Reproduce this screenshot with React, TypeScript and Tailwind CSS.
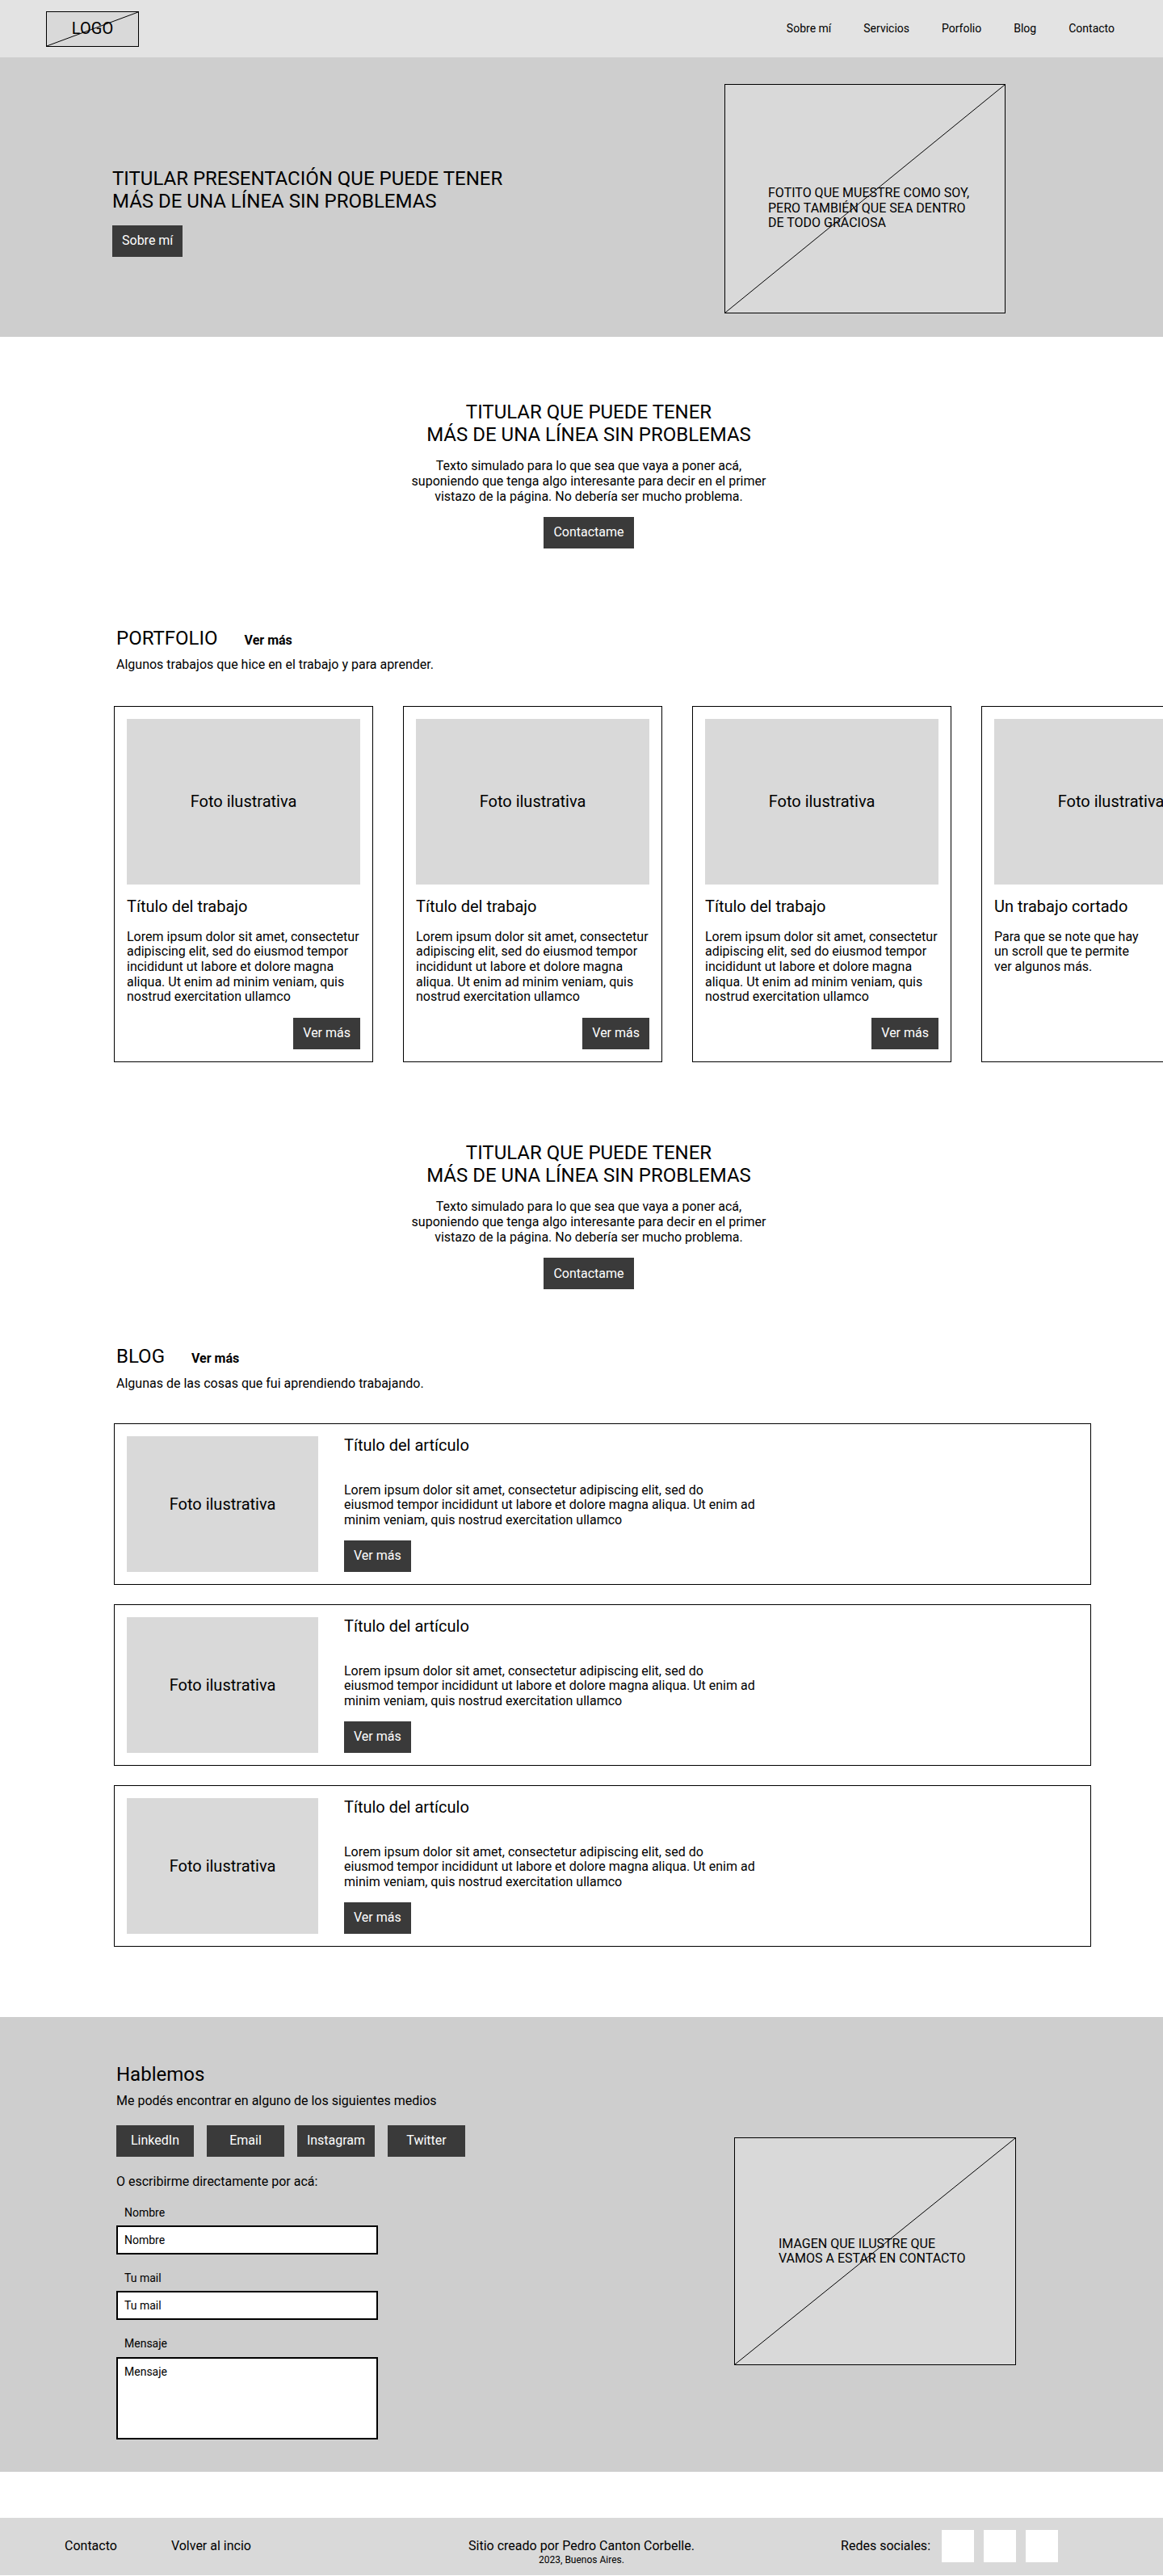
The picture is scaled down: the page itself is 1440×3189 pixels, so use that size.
import React from "react";

const Diagonal = () => (
  <svg
    className="pointer-events-none absolute inset-0 h-full w-full"
    viewBox="0 0 100 100"
    preserveAspectRatio="none"
  >
    <line x1="0" y1="100" x2="100" y2="0" stroke="#000" strokeWidth="1" vectorEffect="non-scaling-stroke" />
  </svg>
);

const Btn = ({ children, className = "" }: { children: React.ReactNode; className?: string }) => (
  <div
    className={`inline-flex h-[39px] items-center justify-center bg-[#3a3a3a] px-3 text-[16px] leading-[1.17] text-white ${className}`}
  >
    {children}
  </div>
);

const SectionTitle = ({ className = "" }: { className?: string }) => (
  <section className={`flex flex-col items-center pl-[18px] text-center ${className}`}>
    <h2 className="text-[24px] leading-[1.17]">
      TITULAR QUE PUEDE TENER
      <br />
      MÁS DE UNA LÍNEA SIN PROBLEMAS
    </h2>
    <p className="mt-4 text-[16px] leading-[1.17]">
      Texto simulado para lo que sea que vaya a poner acá,
      <br />
      suponiendo que tenga algo interesante para decir en el primer
      <br />
      vistazo de la página. No debería ser mucho problema.
    </p>
    <div className="mt-4">
      <Btn>Contactame</Btn>
    </div>
  </section>
);

const lorem = [
  "Lorem ipsum dolor sit amet, consectetur",
  "adipiscing elit, sed do eiusmod tempor",
  "incididunt ut labore et dolore magna",
  "aliqua. Ut enim ad minim veniam, quis",
  "nostrud exercitation ullamco",
];

const PortfolioCard = ({ title, lines, button = true }: { title: string; lines: string[]; button?: boolean }) => (
  <div className="flex h-[441px] w-[321px] shrink-0 flex-col border border-black p-[15px]">
    <div className="flex h-[205px] shrink-0 items-center justify-center bg-[#d9d9d9] text-[20px] leading-[1.17]">
      Foto ilustrativa
    </div>
    <h4 className="mt-4 text-[20px] leading-[1.17]">{title}</h4>
    <p className="mt-4 whitespace-nowrap text-[16px] leading-[1.17]">
      {lines.map((l, i) => (
        <React.Fragment key={i}>
          {l}
          {i < lines.length - 1 && <br />}
        </React.Fragment>
      ))}
    </p>
    {button && (
      <div className="mt-auto self-end">
        <Btn>Ver más</Btn>
      </div>
    )}
  </div>
);

const BlogCard = () => (
  <div className="flex h-[200px] w-[1210px] border border-black p-[15px]">
    <div className="flex h-full w-[237px] shrink-0 items-center justify-center bg-[#d9d9d9] text-[20px] leading-[1.17]">
      Foto ilustrativa
    </div>
    <div className="ml-[32px] flex flex-col items-start">
      <h4 className="text-[20px] leading-[1.17]">Título del artículo</h4>
      <p className="mt-[34px] whitespace-nowrap text-[16px] leading-[1.17]">
        Lorem ipsum dolor sit amet, consectetur adipiscing elit, sed do
        <br />
        eiusmod tempor incididunt ut labore et dolore magna aliqua. Ut enim ad
        <br />
        minim veniam, quis nostrud exercitation ullamco
      </p>
      <div className="mt-[15px]">
        <Btn>Ver más</Btn>
      </div>
    </div>
  </div>
);

const Field = ({ label, tall = false, className = "" }: { label: string; tall?: boolean; className?: string }) => (
  <div className={className}>
    <label className="block pl-[10px] text-[14px] leading-[1.17]">{label}</label>
    {tall ? (
      <textarea
        placeholder={label}
        className="mt-2 block h-[102px] w-[324px] resize-none border-2 border-black bg-white px-[8px] pt-[8px] text-[14px] leading-[1.17] outline-none placeholder:text-black"
      />
    ) : (
      <input
        placeholder={label}
        className="mt-2 block h-[36px] w-[324px] border-2 border-black bg-white px-[8px] text-[14px] outline-none placeholder:text-black"
      />
    )}
  </div>
);

const SectionHeading = ({ title, subtitle }: { title: string; subtitle: string }) => (
  <div className="pl-[144px]">
    <div className="flex items-baseline">
      <h3 className="text-[24px] leading-[1.17]">{title}</h3>
      <span className="ml-[33px] text-[16px] font-bold leading-[1.17]">Ver más</span>
    </div>
    <p className="mt-[10px] text-[16px] leading-[1.17]">{subtitle}</p>
  </div>
);

export default function App() {
  return (
    <div className="w-full overflow-hidden bg-white font-[Roboto,sans-serif] text-black">
      {/* Header */}
      <header className="flex h-[71px] items-center justify-between bg-[#e3e3e3] pl-[57px] pr-[60px]">
        <div className="relative flex h-[44px] w-[115px] items-center justify-center border border-black bg-[#d9d9d9] text-[20px] leading-[1.17]">
          <Diagonal />
          <span className="relative">LOGO</span>
        </div>
        <nav className="flex gap-10 text-[14px] leading-[1.17]">
          <a>Sobre mí</a>
          <a>Servicios</a>
          <a>Porfolio</a>
          <a>Blog</a>
          <a>Contacto</a>
        </nav>
      </header>

      {/* Hero */}
      <section className="flex h-[346px] bg-[#cecece] pl-[139px] pt-[33px]">
        <div className="w-[758px] pt-[103px]">
          <h1 className="text-[24px] leading-[1.17]">
            TITULAR PRESENTACIÓN QUE PUEDE TENER
            <br />
            MÁS DE UNA LÍNEA SIN PROBLEMAS
          </h1>
          <div className="mt-4">
            <Btn>Sobre mí</Btn>
          </div>
        </div>
        <div className="relative h-[284px] w-[348px] border border-black bg-[#d9d9d9]">
          <Diagonal />
          <p className="relative pl-[53px] pt-[125px] text-[16px] leading-[1.17]">
            FOTITO QUE MUESTRE COMO SOY,
            <br />
            PERO TAMBIÉN QUE SEA DENTRO
            <br />
            DE TODO GRACIOSA
          </p>
        </div>
      </section>

      <SectionTitle className="pt-[79px]" />

      {/* Portfolio */}
      <section className="pt-[97px]">
        <SectionHeading title="PORTFOLIO" subtitle="Algunos trabajos que hice en el trabajo y para aprender." />
        <div className="mt-[41px] flex gap-[37px] overflow-hidden pl-[141px]">
          <PortfolioCard title="Título del trabajo" lines={lorem} />
          <PortfolioCard title="Título del trabajo" lines={lorem} />
          <PortfolioCard title="Título del trabajo" lines={lorem} />
          <PortfolioCard
            title="Un trabajo cortado"
            lines={["Para que se note que hay", "un scroll que te permite", "ver algunos más."]}
            button={false}
          />
        </div>
      </section>

      <SectionTitle className="pt-[98px]" />

      {/* Blog */}
      <section className="pt-[69px]">
        <SectionHeading title="BLOG" subtitle="Algunas de las cosas que fui aprendiendo trabajando." />
        <div className="mt-[40px] flex flex-col gap-6 pl-[141px]">
          <BlogCard />
          <BlogCard />
          <BlogCard />
        </div>
      </section>

      {/* Contact */}
      <section className="mt-[87px] flex h-[563px] bg-[#cecece] pl-[144px] pt-[57px]">
        <div className="w-[765px]">
          <h3 className="text-[24px] leading-[1.17]">Hablemos</h3>
          <p className="mt-[10px] text-[16px] leading-[1.17]">Me podés encontrar en alguno de los siguientes medios</p>
          <div className="mt-5 flex gap-4">
            <Btn className="w-[96px]">LinkedIn</Btn>
            <Btn className="w-[96px]">Email</Btn>
            <Btn className="w-[96px]">Instagram</Btn>
            <Btn className="w-[96px]">Twitter</Btn>
          </div>
          <p className="mt-[22px] text-[16px] leading-[1.17]">O escribirme directamente por acá:</p>
          <Field label="Nombre" className="mt-5" />
          <Field label="Tu mail" className="mt-[21px]" />
          <Field label="Mensaje" tall className="mt-[21px]" />
        </div>
        <div className="relative mt-[92px] h-[282px] w-[349px] border border-black bg-[#d9d9d9]">
          <Diagonal />
          <div className="relative flex h-full items-center pl-[54px] text-[16px] leading-[1.17]">
            <p>
              IMAGEN QUE ILUSTRE QUE
              <br />
              VAMOS A ESTAR EN CONTACTO
            </p>
          </div>
        </div>
      </section>

      {/* Footer */}
      <footer className="mt-[57px] flex h-[71px] bg-[#d9d9d9] pt-[15px]">
        <div className="flex h-10 w-[480px] shrink-0 items-center gap-[67px] pl-[80px] text-[16px] leading-[1.17]">
          <a>Contacto</a>
          <a>Volver al incio</a>
        </div>
        <div className="w-[480px] shrink-0 pt-[11px] text-center">
          <p className="text-[16px] leading-[1.17]">Sitio creado por Pedro Canton Corbelle.</p>
          <p className="text-[12px] leading-[1.17]">2023, Buenos Aires.</p>
        </div>
        <div className="flex h-10 w-[480px] shrink-0 items-center justify-end gap-3 pr-[130px]">
          <span className="mr-[2px] text-[16px] leading-[1.17]">Redes sociales:</span>
          <div className="h-10 w-10 bg-white" />
          <div className="h-10 w-10 bg-white" />
          <div className="h-10 w-10 bg-white" />
        </div>
      </footer>
    </div>
  );
}
